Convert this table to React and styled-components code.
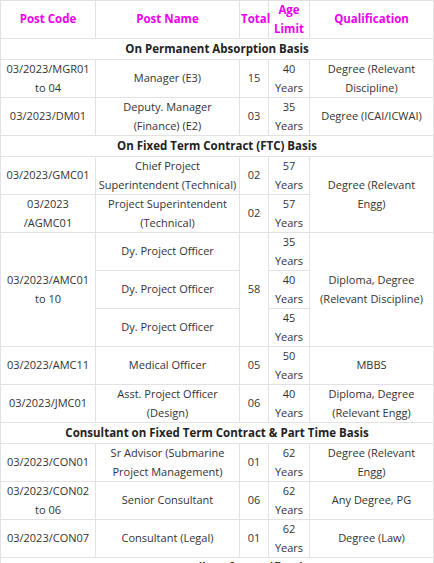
import React from 'react'
import styled, { createGlobalStyle } from 'styled-components';

const GlobalStyle = createGlobalStyle`
  body {
    margin: 0;
    background: #fff;
    font-family: "Open Sans", "Noto Sans", sans-serif;
  }
`

const Table = styled.table`
  width: 433px;
  border-collapse: collapse;
  table-layout: fixed;
  color: #333;
  font-size: 11px;
`

const Cell = styled.td`
  border: 1px solid #e2e2e2;
  padding: 0 1px;
  text-align: center;
  vertical-align: middle;
  line-height: 18.5px;
  height: 37px;
  white-space: ${p => (p.$keep ? 'nowrap' : 'normal')};
`

const HeadCell = styled.th`
  border: 1px solid #e2e2e2;
  padding: 0 1px;
  text-align: center;
  vertical-align: middle;
  line-height: 18.5px;
  height: 37px;
  color: #ee00ee;
  font-size: 11.5px;
  font-weight: bold;
`

const SectionCell = styled.td`
  border: 1px solid #e2e2e2;
  padding: 0;
  text-align: center;
  font-weight: bold;
  font-size: 11.5px;
  line-height: 20px;
  height: 20px;
  color: #222;
`

const Section = ({ children }) => (
  <tr>
    <SectionCell colSpan={5}>{children}</SectionCell>
  </tr>
)

// two lines broken where the reference breaks them
const Two = ({ a, b }) => (
  <>
    {a}
    <br />
    {b}
  </>
)

const App = () => {
  return (
    <>
      <GlobalStyle />
      <Table>
        <colgroup>
          <col style={{ width: 95 }} />
          <col style={{ width: 144 }} />
          <col style={{ width: 29 }} />
          <col style={{ width: 41 }} />
          <col style={{ width: 124 }} />
        </colgroup>
        <thead>
          <tr>
            <HeadCell>Post Code</HeadCell>
            <HeadCell>Post Name</HeadCell>
            <HeadCell>Total</HeadCell>
            <HeadCell>Age Limit</HeadCell>
            <HeadCell>Qualification</HeadCell>
          </tr>
        </thead>
        <tbody>
          <Section>On Permanent Absorption Basis</Section>
          <tr>
            <Cell $keep><Two a="03/2023/MGR01" b="to 04" /></Cell>
            <Cell>Manager (E3)</Cell>
            <Cell>15</Cell>
            <Cell>40 Years</Cell>
            <Cell $keep><Two a="Degree (Relevant" b="Discipline)" /></Cell>
          </tr>
          <tr>
            <Cell>03/2023/DM01</Cell>
            <Cell $keep><Two a="Deputy. Manager" b="(Finance) (E2)" /></Cell>
            <Cell>03</Cell>
            <Cell>35 Years</Cell>
            <Cell>Degree (ICAI/ICWAI)</Cell>
          </tr>
          <Section>On Fixed Term Contract (FTC) Basis</Section>
          <tr>
            <Cell>03/2023/GMC01</Cell>
            <Cell $keep><Two a="Chief Project" b="Superintendent (Technical)" /></Cell>
            <Cell>02</Cell>
            <Cell>57 Years</Cell>
            <Cell rowSpan={2} $keep><Two a="Degree (Relevant" b="Engg)" /></Cell>
          </tr>
          <tr>
            <Cell $keep><Two a="03/2023" b="/AGMC01" /></Cell>
            <Cell $keep><Two a="Project Superintendent" b="(Technical)" /></Cell>
            <Cell>02</Cell>
            <Cell>57 Years</Cell>
          </tr>
          <tr>
            <Cell rowSpan={3} $keep><Two a="03/2023/AMC01" b="to 10" /></Cell>
            <Cell>Dy. Project Officer</Cell>
            <Cell rowSpan={3}>58</Cell>
            <Cell>35 Years</Cell>
            <Cell rowSpan={3} $keep><Two a="Diploma, Degree" b="(Relevant Discipline)" /></Cell>
          </tr>
          <tr>
            <Cell>Dy. Project Officer</Cell>
            <Cell>40 Years</Cell>
          </tr>
          <tr>
            <Cell>Dy. Project Officer</Cell>
            <Cell>45 Years</Cell>
          </tr>
          <tr>
            <Cell>03/2023/AMC11</Cell>
            <Cell>Medical Officer</Cell>
            <Cell>05</Cell>
            <Cell>50 Years</Cell>
            <Cell>MBBS</Cell>
          </tr>
          <tr>
            <Cell>03/2023/JMC01</Cell>
            <Cell $keep><Two a="Asst. Project Officer" b="(Design)" /></Cell>
            <Cell>06</Cell>
            <Cell>40 Years</Cell>
            <Cell $keep><Two a="Diploma, Degree" b="(Relevant Engg)" /></Cell>
          </tr>
          <Section>Consultant on Fixed Term Contract &amp; Part Time Basis</Section>
          <tr>
            <Cell>03/2023/CON01</Cell>
            <Cell $keep><Two a="Sr Advisor (Submarine" b="Project Management)" /></Cell>
            <Cell>01</Cell>
            <Cell>62 Years</Cell>
            <Cell $keep><Two a="Degree (Relevant" b="Engg)" /></Cell>
          </tr>
          <tr>
            <Cell $keep><Two a="03/2023/CON02" b="to 06" /></Cell>
            <Cell>Senior Consultant</Cell>
            <Cell>06</Cell>
            <Cell>62 Years</Cell>
            <Cell>Any Degree, PG</Cell>
          </tr>
          <tr>
            <Cell>03/2023/CON07</Cell>
            <Cell>Consultant (Legal)</Cell>
            <Cell>01</Cell>
            <Cell>62 Years</Cell>
            <Cell>Degree (Law)</Cell>
          </tr>
          <Section>For More Details Refer Notification</Section>
        </tbody>
      </Table>
    </>
  )
}

export default App
